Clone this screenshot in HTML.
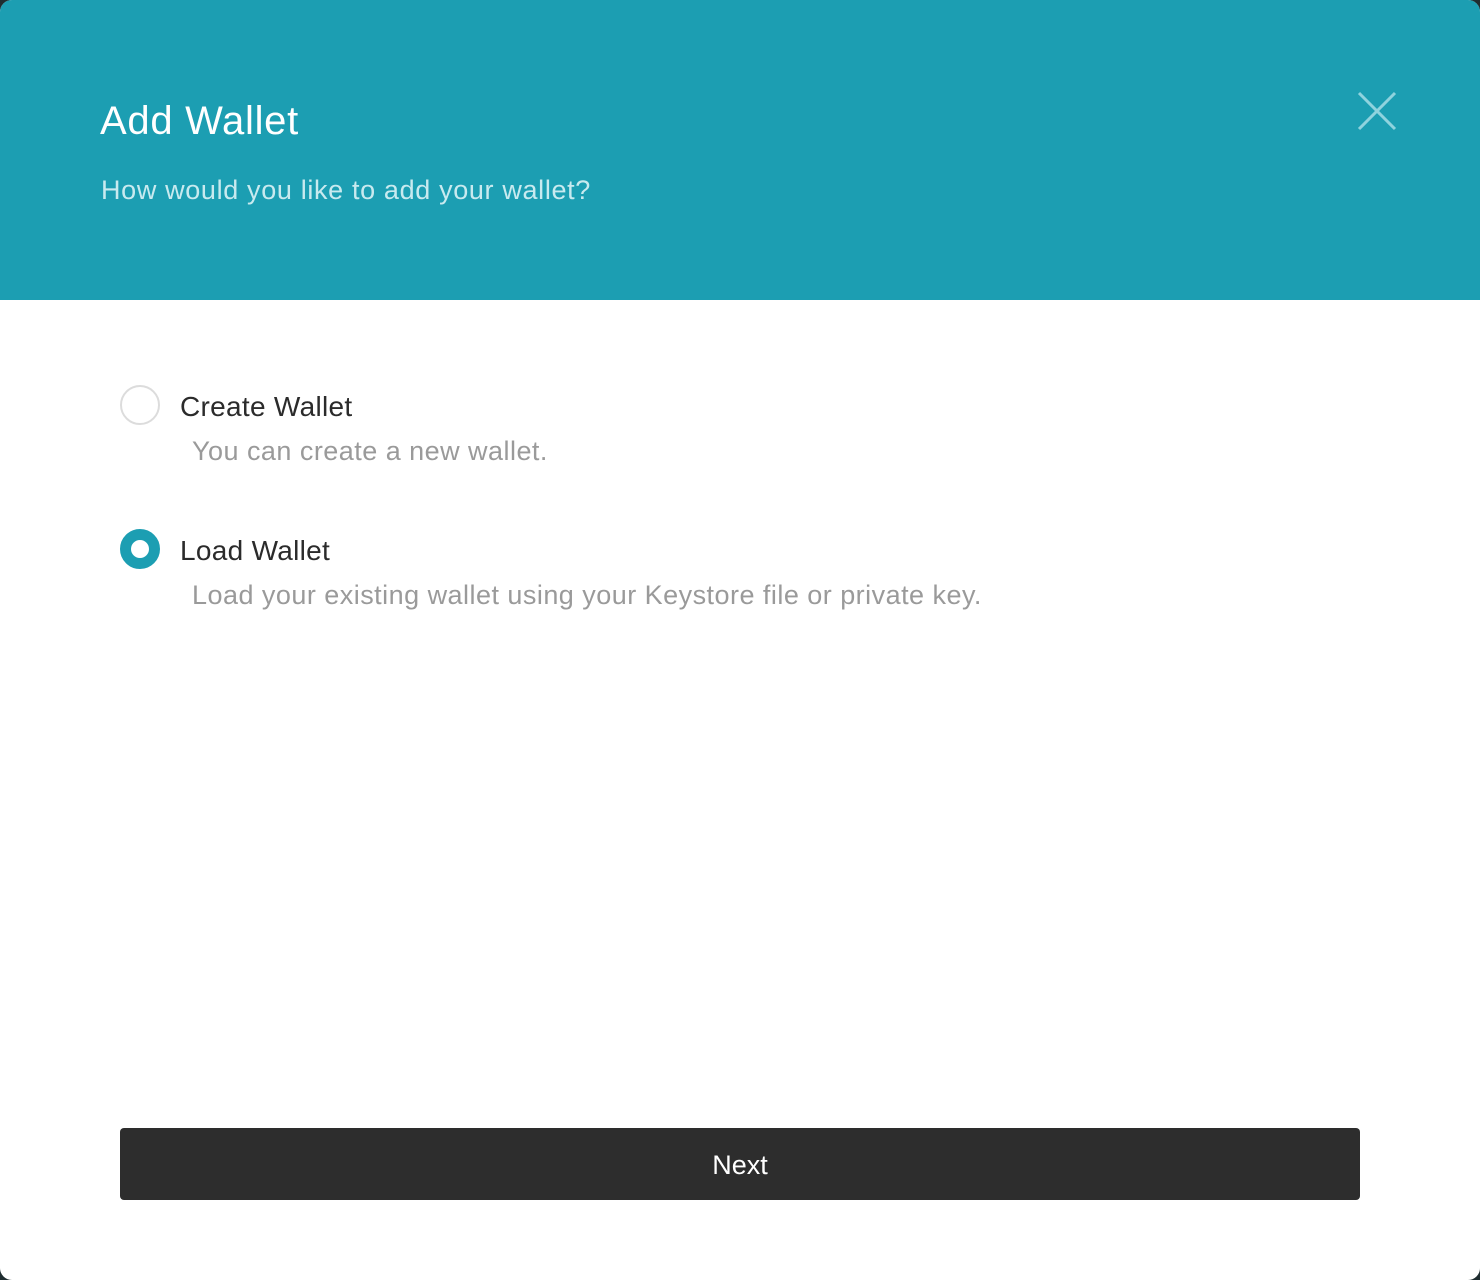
<!DOCTYPE html>
<html><head><meta charset="utf-8"><style>
html,body{margin:0;padding:0;}
body{width:1480px;height:1280px;background:#1f2d30;font-family:"Liberation Sans",sans-serif;position:relative;overflow:hidden;}
.card{position:absolute;left:0;top:0;width:1480px;height:1280px;background:#fff;border-radius:12px;overflow:hidden;}
.head{position:absolute;left:0;top:0;width:1480px;height:300px;background:#1c9eb2;}
.t{position:absolute;left:100px;top:99px;font-size:40px;color:#fff;white-space:nowrap;letter-spacing:0.7px;}
.s{position:absolute;left:101px;top:175px;font-size:27px;color:#c8eaef;white-space:nowrap;letter-spacing:0.65px;}
.x{position:absolute;left:1356px;top:90px;}
.r{position:absolute;width:40px;height:40px;border-radius:50%;box-sizing:border-box;}
.r1{left:120px;top:385px;border:2px solid #dcdcdc;}
.r2{left:120px;top:529px;border:11px solid #1c9eb2;}
.ot{position:absolute;left:180px;font-size:28px;color:#2b2b2b;white-space:nowrap;letter-spacing:0.3px;}
.od{position:absolute;left:192px;font-size:27px;color:#9a9a9a;white-space:nowrap;letter-spacing:0.47px;}
.btn{position:absolute;left:120px;top:1128px;width:1240px;height:72px;background:#2d2d2d;border-radius:4px;color:#fff;font-size:27px;text-align:center;line-height:74px;}
</style></head><body>
<div class="card">
<div class="head">
<div class="t">Add Wallet</div>
<div class="s">How would you like to add your wallet?</div>
<svg class="x" width="42" height="42" viewBox="0 0 42 42"><path d="M3 3L39 39M39 3L3 39" stroke="#8fd3de" stroke-width="3"/></svg>
</div>
<div class="r r1"></div>
<div class="ot" style="top:391px">Create Wallet</div>
<div class="od" style="top:436px">You can create a new wallet.</div>
<div class="r r2"></div>
<div class="ot" style="top:535px">Load Wallet</div>
<div class="od" style="top:580px">Load your existing wallet using your Keystore file or private key.</div>
<div class="btn">Next</div>
</div>
</body></html>
